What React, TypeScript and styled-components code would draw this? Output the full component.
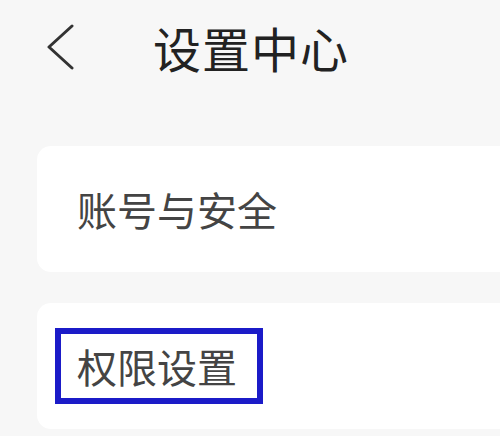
import styled, { createGlobalStyle } from "styled-components";

const GlobalStyle = createGlobalStyle`
  html, body {
    margin: 0;
    padding: 0;
    background: #f7f7f7;
    font-family: "Noto Sans CJK SC", "Noto Sans", sans-serif;
  }
  body {
    width: 500px;
    height: 436px;
    overflow: hidden;
  }
`;

const Page = styled.main`
  display: flex;
  flex-direction: column;
  width: 500px;
  height: 436px;
  overflow: hidden;
`;

const Header = styled.header`
  display: flex;
  align-items: center;
  height: 94px;
  padding-left: 45px;
`;

const BackButton = styled.button`
  display: flex;
  align-items: center;
  justify-content: center;
  width: 32px;
  height: 46px;
  padding: 0;
  border: none;
  background: none;
  cursor: pointer;
`;

const Title = styled.h1`
  margin: 0 0 0 76px;
  font-size: 48px;
  line-height: 48px;
  font-weight: 400;
  letter-spacing: 1px;
  color: #222;
`;

const List = styled.div`
  display: flex;
  flex-direction: column;
  gap: 31px;
  margin-top: 52px;
  margin-left: 37px;
  width: 480px;
`;

const Card = styled.div`
  display: flex;
  align-items: center;
  height: 126px;
  padding-left: 18px;
  border-radius: 14px;
  background: #ffffff;
`;

const Label = styled.span<{ $focused?: boolean }>`
  font-size: 40px;
  line-height: 40px;
  color: #444;
  padding: ${({ $focused }) => ($focused ? "12px 20px 12px 16px" : "0 0 0 22px")};
  border: ${({ $focused }) => ($focused ? "6px solid #1b1bc8" : "none")};
`;

function ChevronLeft() {
  return (
    <svg width="32" height="46" viewBox="0 0 32 46" fill="none">
      <polyline
        points="27,2 4,23 27,44"
        stroke="#333"
        strokeWidth="3"
        strokeLinecap="round"
        strokeLinejoin="round"
      />
    </svg>
  );
}

export default function App() {
  return (
    <>
      <GlobalStyle />
      <Page>
        <Header>
          <BackButton aria-label="返回">
            <ChevronLeft />
          </BackButton>
          <Title>设置中心</Title>
        </Header>
        <List>
          <Card>
            <Label>账号与安全</Label>
          </Card>
          <Card>
            <Label $focused>权限设置</Label>
          </Card>
        </List>
      </Page>
    </>
  );
}
